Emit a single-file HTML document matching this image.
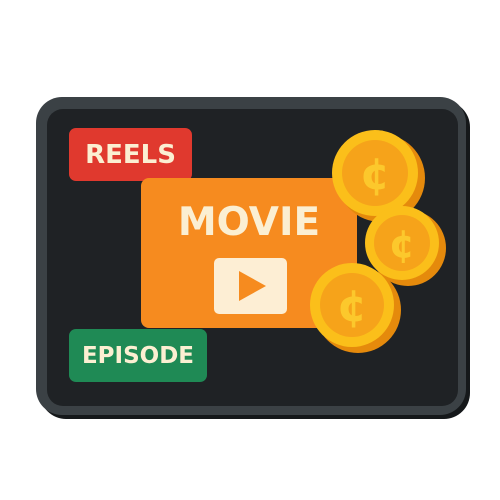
<!DOCTYPE html><html><head><style>
body{margin:0;width:500px;height:500px;background:#fff;position:relative;overflow:hidden;font-family:"DejaVu Sans","Liberation Sans",sans-serif;font-weight:bold}
div{position:absolute;box-sizing:border-box}
.frame{left:36px;top:97px;width:430px;height:318px;background:#3b4145;border-radius:26px;box-shadow:4px 4px 0 #15181a}
.inner{left:47px;top:109px;width:411px;height:297px;background:#1f2225;border-radius:16px}
.lab{color:#fbefd2;display:flex;align-items:center;justify-content:center;border-radius:7px}
</style></head><body>
<div class="frame"></div><div class="inner"></div>
<div class="lab" style="left:69px;top:128px;width:123px;height:53px;background:#e0392e;font-size:26px">REELS</div>
<div class="lab" style="left:69px;top:329px;width:138px;height:53px;background:#1f8a55;font-size:23px">EPISODE</div>
<div style="left:141px;top:178px;width:216px;height:150px;background:#f68b1f;border-radius:8px"></div>
<div class="lab" style="left:141px;top:195px;width:216px;height:54px;font-size:39px">MOVIE</div>
<div style="left:214px;top:258px;width:73px;height:56px;background:#fdeed4;border-radius:5px"></div>
<svg style="position:absolute;left:0;top:0" width="500" height="500">
<polygon points="239,271 239,301 266,286" fill="#f68b1f"/>
<g font-family="DejaVu Sans" font-weight="bold" text-anchor="middle">
<circle cx="381" cy="178" r="44" fill="#e58a0c"/><circle cx="375" cy="173" r="43" fill="#fbbf1a"/><circle cx="375" cy="173" r="33" fill="#f6a31a"/><text x="375" y="189" font-size="44" fill="#fcc82c">¢</text>
<circle cx="408" cy="248" r="38" fill="#e58a0c"/><circle cx="402" cy="243" r="37" fill="#fbbf1a"/><circle cx="402" cy="243" r="28" fill="#f6a31a"/><text x="402" y="257" font-size="38" fill="#fcc82c">¢</text>
<circle cx="358" cy="310" r="43" fill="#e58a0c"/><circle cx="352" cy="305" r="42" fill="#fbbf1a"/><circle cx="352" cy="305" r="32" fill="#f6a31a"/><text x="352" y="321" font-size="44" fill="#fcc82c">¢</text>
</g></svg>
</body></html>
